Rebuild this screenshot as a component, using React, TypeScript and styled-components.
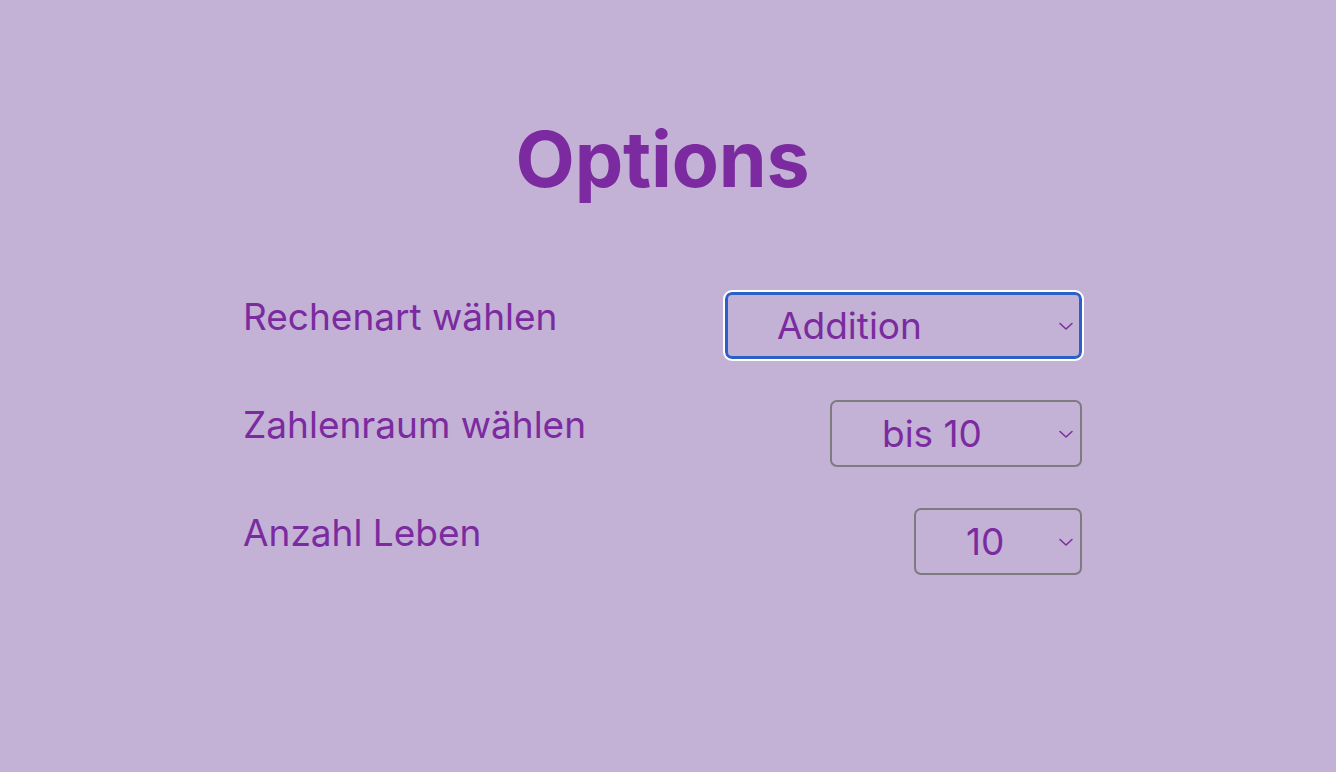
import React from "react";
import styled, { createGlobalStyle } from "styled-components";

const Global = createGlobalStyle`
  html, body { margin: 0; padding: 0; background: #c3b1d6; }
  body { font-family: Inter, "Noto Sans", sans-serif; color: #7b2b9f; }
  #root { min-height: 772px; }
`;

const Page = styled.main`
  display: flex;
  flex-direction: column;
  align-items: center;
  padding: 113px 11px 0 0;
`;

const Title = styled.h1`
  margin: 0 0 86px 0;
  font-size: 77px;
  font-weight: 700;
  line-height: 1.21;
  color: #7b2b9f;
  letter-spacing: -0.2px;
`;

const Form = styled.div`
  width: 839px;
  display: flex;
  flex-direction: column;
  gap: 41px;
`;

const Row = styled.div`
  display: flex;
  justify-content: space-between;
  align-items: flex-start;
  height: 67px;
`;

const Label = styled.label`
  font-size: 37px;
  line-height: 1.21;
  margin-top: 3px;
  color: #7b2b9f;
`;

const SelectWrap = styled.div<{ $w: number }>`
  position: relative;
  width: ${(p) => p.$w}px;
  height: 67px;
`;

const Select = styled.select<{ $focused?: boolean }>`
  appearance: none;
  -webkit-appearance: none;
  box-sizing: border-box;
  width: 100%;
  height: 100%;
  padding: 0 40px 0 50px;
  font-family: Inter, "Noto Sans", sans-serif;
  font-size: 37px;
  color: #7b2b9f;
  background: transparent;
  border-radius: 7px;
  border: ${(p) => (p.$focused ? "3px solid #2b5fc9" : "2px solid #7d7a80")};
  outline: ${(p) => (p.$focused ? "2px solid #ffffff" : "none")};
  outline-offset: 0;
  padding-left: ${(p) => (p.$focused ? "49px" : "50px")};
`;

const Chevron = styled.svg`
  position: absolute;
  right: 8px;
  top: 29px;
  width: 16px;
  height: 10px;
  pointer-events: none;
`;

function Dropdown({ w, value, options, focused }: { w: number; value: string; options: string[]; focused?: boolean }) {
  return (
    <SelectWrap $w={w}>
      <Select $focused={focused} defaultValue={value}>
        {options.map((o) => (
          <option key={o}>{o}</option>
        ))}
      </Select>
      <Chevron viewBox="0 0 16 10">
        <path d="M2 2.5 L8 8 L14 2.5" fill="none" stroke="#7b2b9f" strokeWidth="1.5" strokeLinecap="round" strokeLinejoin="round" />
      </Chevron>
    </SelectWrap>
  );
}

export default function App() {
  return (
    <>
      <Global />
      <Page>
        <Title>Options</Title>
        <Form>
          <Row>
            <Label>Rechenart wählen</Label>
            <Dropdown w={357} value="Addition" options={["Addition", "Subtraktion", "Multiplikation", "Division"]} focused />
          </Row>
          <Row>
            <Label>Zahlenraum wählen</Label>
            <Dropdown w={252} value="bis 10" options={["bis 10", "bis 20", "bis 100"]} />
          </Row>
          <Row>
            <Label>Anzahl Leben</Label>
            <Dropdown w={168} value="10" options={["3", "5", "10"]} />
          </Row>
        </Form>
      </Page>
    </>
  );
}
